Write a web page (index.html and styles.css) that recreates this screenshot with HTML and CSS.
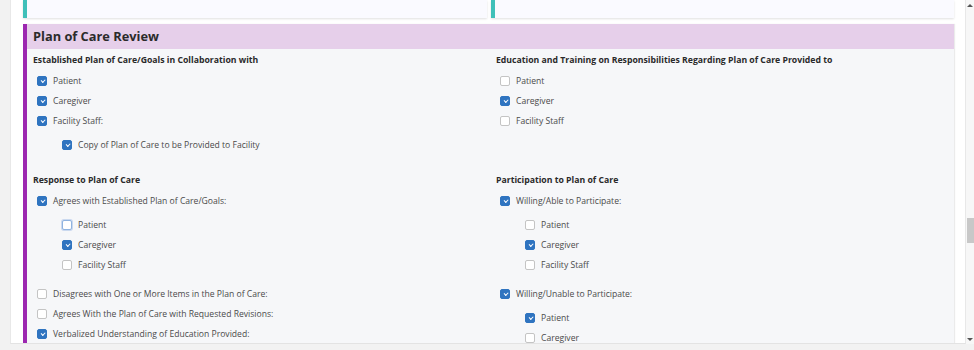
FILE: index.html
```html
<!DOCTYPE html>
<html>
<head>
<meta charset="utf-8">
<link rel="stylesheet" href="styles.css">
</head>
<body>
<div class="panel">
  <div class="cards">
    <div class="card"></div>
    <div class="card"></div>
  </div>
  <div class="section">
    <div class="section-head">Plan of Care Review</div>
    <div class="section-body">
      <div class="group">
        <div class="group-title">Established Plan of Care/Goals in Collaboration with</div>
        <div class="opt"><span class="cb on"></span>Patient</div>
        <div class="opt"><span class="cb on"></span>Caregiver</div>
        <div class="opt"><span class="cb on"></span>Facility Staff:</div>
        <div class="sub">
          <div class="opt"><span class="cb on"></span>Copy of Plan of Care to be Provided to Facility</div>
        </div>
      </div>
      <div class="group">
        <div class="group-title">Education and Training on Responsibilities Regarding Plan of Care Provided to</div>
        <div class="opt"><span class="cb"></span>Patient</div>
        <div class="opt"><span class="cb on"></span>Caregiver</div>
        <div class="opt"><span class="cb"></span>Facility Staff</div>
      </div>
      <div class="group">
        <div class="group-title">Response to Plan of Care</div>
        <div class="opt"><span class="cb on"></span>Agrees with Established Plan of Care/Goals:</div>
        <div class="sub">
          <div class="opt"><span class="cb focus"></span>Patient</div>
          <div class="opt"><span class="cb on"></span>Caregiver</div>
          <div class="opt"><span class="cb"></span>Facility Staff</div>
        </div>
        <div class="opt"><span class="cb"></span>Disagrees with One or More Items in the Plan of Care:</div>
        <div class="opt"><span class="cb"></span>Agrees With the Plan of Care with Requested Revisions:</div>
        <div class="opt"><span class="cb on"></span>Verbalized Understanding of Education Provided:</div>
      </div>
      <div class="group">
        <div class="group-title">Participation to Plan of Care</div>
        <div class="opt"><span class="cb on"></span>Willing/Able to Participate:</div>
        <div class="sub">
          <div class="opt"><span class="cb"></span>Patient</div>
          <div class="opt"><span class="cb on"></span>Caregiver</div>
          <div class="opt"><span class="cb"></span>Facility Staff</div>
        </div>
        <div class="opt"><span class="cb on"></span>Willing/Unable to Participate:</div>
        <div class="sub">
          <div class="opt"><span class="cb on"></span>Patient</div>
          <div class="opt"><span class="cb"></span>Caregiver</div>
        </div>
      </div>
    </div>
  </div>
</div>
<div class="scrollbar">
  <div class="arrow up"></div>
  <div class="track"><div class="thumb"></div></div>
  <div class="arrow down"></div>
</div>
</body>
</html>
```

FILE: styles.css
```css
* { box-sizing: border-box; }
html, body { margin: 0; padding: 0; }
body {
  width: 974px;
  height: 350px;
  overflow: hidden;
  background: #f2f2f2;
  display: flex;
  align-items: flex-start;
  font-family: "Open Sans", "Noto Sans", sans-serif;
}
.panel {
  margin-left: 10px;
  width: 956px;
  height: 344px;
  background: #ffffff;
  border-left: 1px solid #e8e8e8;
  border-right: 1px solid #e8e8e8;
  border-bottom: 1px solid #e3e3e3;
  padding: 0 11px 0 12px;
  overflow: hidden;
}
.cards {
  display: flex;
  gap: 4px;
  height: 18px;
}
.card {
  flex: 1;
  height: 18px;
  background: #fafaff;
  border-left: 4px solid #3fc0b9;
  box-shadow: 0 1px 2px rgba(0,0,0,0.12);
}
.section {
  margin-top: 6px;
  border-left: 4px solid #9c27b0;
  background: #f6f7f9;
  box-shadow: 1px 0 1px rgba(0,0,0,0.08);
  height: 400px;
}
.section-head {
  height: 25px;
  background: #e6cfea;
  padding-left: 6px;
  font-size: 12.8px;
  font-weight: 700;
  color: #2b2b2b;
  line-height: 25px;
}
.section-body {
  display: grid;
  grid-template-columns: 463px 1fr;
  padding: 4px 6px 0 6px;
  row-gap: 9px;
}
.group-title {
  font-size: 8.7px;
  font-weight: 700;
  color: #2a2a2a;
  height: 14px;
  line-height: 14px;
  margin-bottom: 4px;
}
.opt {
  display: flex;
  align-items: center;
  height: 20px;
  padding-left: 4px;
  font-size: 8.6px;
  color: #4a4a4a;
}
.sub {
  padding-left: 25px;
  padding-top: 4px;
  padding-bottom: 9px;
}
.cb {
  width: 10px;
  height: 10px;
  border: 1px solid #c4c4c4;
  border-radius: 2px;
  background: #fff;
  margin-right: 6px;
  position: relative;
  flex: none;
}
.cb.on {
  background: #2f74c0;
  border-color: #2f74c0;
}
.cb.on::after {
  content: "";
  position: absolute;
  left: 2.5px;
  top: 2px;
  width: 3px;
  height: 1.6px;
  border-left: 1.3px solid #fff;
  border-bottom: 1.3px solid #fff;
  transform: rotate(-45deg);
  transform-origin: center;
}
.cb.focus {
  border-color: #8fb3e0;
  box-shadow: 0 0 0 1px rgba(120,160,220,0.35);
}
.scrollbar {
  width: 8px;
  margin-left: 0;
  height: 344px;
  background: #f7f7f7;
  display: flex;
  flex-direction: column;
}
.arrow {
  height: 10px;
  display: flex;
  justify-content: center;
  align-items: center;
}
.arrow.up::before {
  content: "";
  border-left: 3px solid transparent;
  border-right: 3px solid transparent;
  border-bottom: 3px solid #555;
}
.arrow.down::before {
  content: "";
  border-left: 3px solid transparent;
  border-right: 3px solid transparent;
  border-top: 3px solid #555;
}
.track {
  flex: 1;
  padding-top: 208px;
  display: flex;
  justify-content: flex-end;
}
.thumb {
  width: 7px;
  height: 25px;
  background: #c8c8c8;
}
```
